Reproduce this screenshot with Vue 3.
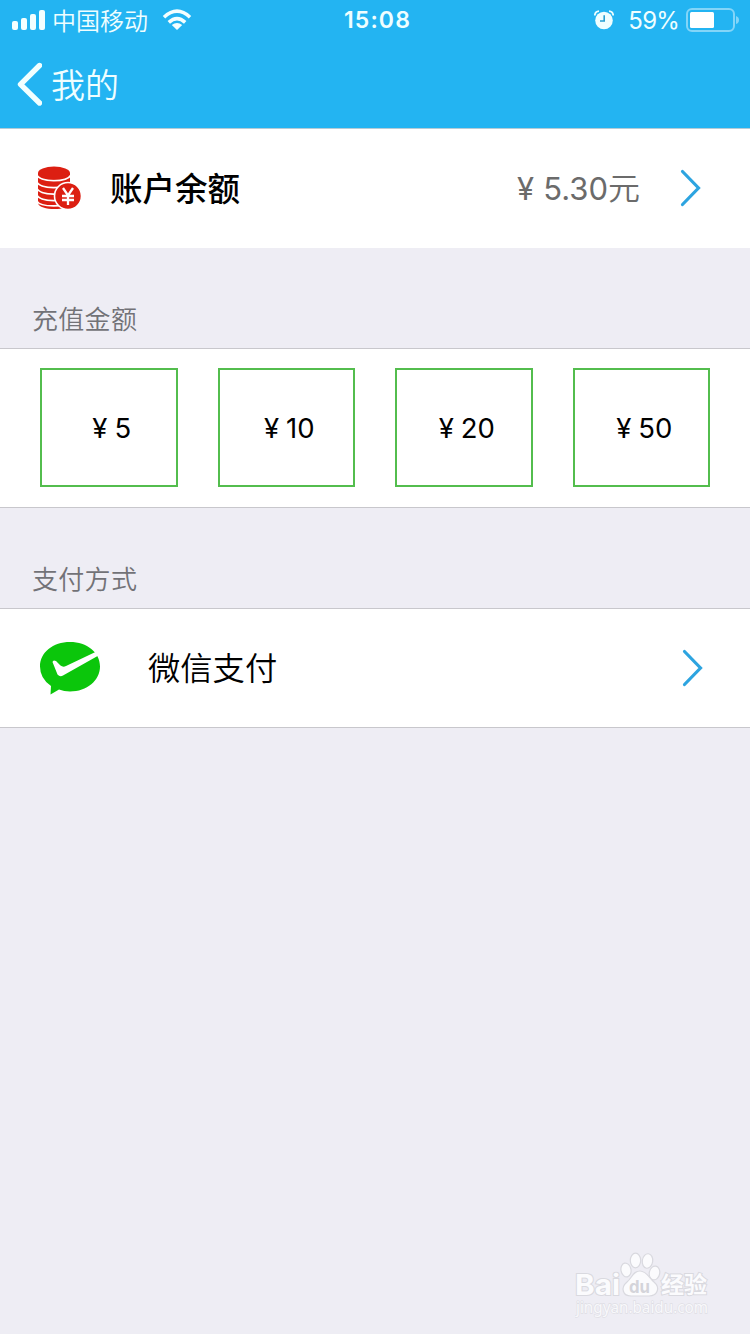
<script setup>
const signalBars = [9, 12, 16, 20]
const amounts = [5, 10, 20, 50]
</script>

<template>
  <main class="screen">
    <header class="top">
      <div class="status">
        <div class="carrier">
          <div class="signal">
            <i v-for="h in signalBars" :key="h" :style="{ height: h + 'px' }"></i>
          </div>
          <span class="carrier-name">中国移动</span>
          <svg class="wifi" width="30" height="22" viewBox="0 0 30 22">
            <g fill="none" stroke="#f4ffff" stroke-width="3.6">
              <path d="M2 8.2Q15-3.8 28 8.2" />
              <path d="M6.8 13.4Q15 6 23.2 13.4" />
            </g>
            <path d="M9.8 16Q15 12 20.2 16L15 21Z" fill="#f4ffff" />
          </svg>
        </div>
        <time class="clock">15:08</time>
        <div class="power">
          <svg class="alarm" width="20" height="20" viewBox="0 0 20 20">
            <path d="M.8 5.5Q1 1.5 5 1.2M19.2 5.5Q19 1.5 15 1.2" fill="none" stroke="#effeff" stroke-width="1.8" />
            <circle cx="10" cy="10.5" r="8.8" fill="#effeff" />
            <path d="M10.2 5.2V11H6" fill="none" stroke="#279fd2" stroke-width="1.6" />
          </svg>
          <span class="percent">59%</span>
          <svg class="battery" width="53" height="24" viewBox="0 0 53 24">
            <rect x="1" y="1" width="47" height="22" rx="5" fill="none" stroke="#83d5f8" stroke-width="2" />
            <rect x="4" y="4" width="24" height="16" rx="1.5" fill="#fff" />
            <path d="M50 8Q53 9 53 12T50 16Z" fill="#83d5f8" />
          </svg>
        </div>
      </div>
      <nav class="nav">
        <svg width="26" height="44" viewBox="0 0 26 44">
          <path d="M23.500 3.500L4.500 22.300L23.500 41" fill="none" stroke="#f1ffff" stroke-width="5.400" stroke-linecap="round" stroke-linejoin="round" />
        </svg>
        <span class="nav-title">我的</span>
      </nav>
    </header>

    <section class="balance">
      <svg class="coins" width="46" height="46" viewBox="0 0 46 46">
        <path d="M2 8V38C3 46 34 46 34 38V8Z" fill="#dc1f12" />
        <g fill="none" stroke="#fff" stroke-width="1.600">
          <path d="M1 10C4 17.500 31 17.500 35 10" />
          <path d="M1 17C4 24.500 31 24.500 35 17" />
          <path d="M1 23.500C4 31 31 31 35 23.500" />
          <path d="M1 30C4 37.500 31 37.500 35 30" />
          <path d="M1 36C4 42.500 31 42.500 35 36" />
        </g>
        <ellipse cx="18" cy="8" rx="16" ry="6.500" fill="#dc1f12" />
        <circle cx="32" cy="31" r="13.500" fill="#dc1f12" stroke="#fff" stroke-width="1.600" />
        <path d="M27 23L32 30.500L37 23M32 30V40M26 31H38M26 35H38" fill="none" stroke="#fff" stroke-width="2.300" />
      </svg>
      <h1 class="balance-label">账户余额</h1>
      <p class="balance-value"><span class="yen">¥</span><span>5.30</span><span class="unit">元</span></p>
      <svg class="chevron" width="22" height="40" viewBox="0 0 22 40">
        <path d="M2.500 3.500L18.500 20L2.500 36.500" fill="none" stroke="#2da4e0" stroke-width="3.200" stroke-linecap="round" />
      </svg>
    </section>

    <h2 class="caption">充值金额</h2>
    <section class="amounts">
      <button v-for="a in amounts" :key="a" class="amount" type="button">
        <span class="amount-yen">¥</span><span>{{ a }}</span>
      </button>
    </section>

    <h2 class="caption second">支付方式</h2>
    <section class="payment">
      <svg class="wechat" width="62" height="54" viewBox="0 0 62 54">
        <path d="M30 1C47 1 60 11.500 60 25.500S47 50.500 30 50.500Q24 50.500 19 48.500L10.500 53.500L11 45Q0 37.500 0 25.500C0 11.500 13 1 30 1Z" fill="#0bc60b" />
        <path d="M12.500 21Q13 18.500 16 20L20.500 24.500Q23 26.500 26 25L56.500 10.500L58.500 14.500L23 34.500Q20 36.500 17.500 33.500Z" fill="#fff" />
      </svg>
      <span class="payment-name">微信支付</span>
      <svg class="chevron" width="22" height="40" viewBox="0 0 22 40">
        <path d="M2.500 3.500L18.500 20L2.500 36.500" fill="none" stroke="#2da4e0" stroke-width="3.200" stroke-linecap="round" />
      </svg>
    </section>

    <aside class="watermark">
      <svg width="140" height="72" viewBox="0 0 140 72">
        <g fill="#fbfbfd" stroke="#d9d9df" stroke-width="1.200">
          <ellipse cx="51" cy="20" rx="5" ry="7" transform="rotate(-12 51 20)" />
          <ellipse cx="60.500" cy="10.500" rx="5.200" ry="7.300" />
          <ellipse cx="72.500" cy="11" rx="5.200" ry="7.300" transform="rotate(8 72.500 11)" />
          <ellipse cx="79.500" cy="23" rx="5.200" ry="7" transform="rotate(12 79.500 23)" />
          <path d="M65 21C72 21 74 28 79 32C86 38 82 46 74 46H56C48 46 45 38 52 32C57 28 58 21 65 21Z" />
        </g>
        <g fill="#fbfbfd" stroke="#d9d9df" stroke-width="2" paint-order="stroke" font-weight="700">
          <text x="0" y="45" class="latin" font-size="29" textLength="45" lengthAdjust="spacingAndGlyphs">Bai</text>
          <text x="86" y="43" class="han" font-size="23" textLength="46">经验</text>
        </g>
        <text x="1" y="63" class="url" font-size="16" fill="#f8f8fb" stroke="#dedee4" stroke-width="1.300" paint-order="stroke" textLength="132" lengthAdjust="spacingAndGlyphs">jingyan.baidu.com</text>
        <text x="54" y="43" class="latin" font-size="18" font-weight="700" fill="#d4d4da" textLength="21" lengthAdjust="spacingAndGlyphs">du</text>
      </svg>
    </aside>
  </main>
</template>

<style>
html, body { margin: 0; background: #eeedf4; }
</style>

<style scoped>
.screen {
  position: relative;
  box-sizing: border-box;
  width: 750px;
  height: 1334px;
  overflow: hidden;
  background: #eeedf4;
  color: #000;
  font-family: Inter, "Noto Sans CJK SC", sans-serif;
}
.screen svg { display: block; flex: none; }
.top {
  box-sizing: border-box;
  height: 129px;
  background: #23b4f2;
  border-bottom: 1px solid #b4cbd7;
  color: #effeff;
}
.status {
  display: grid;
  grid-template-columns: 1fr auto 1fr;
  grid-template-rows: 40px;
  height: 40px;
  align-items: center;
  padding: 0 12px;
}
.carrier { display: flex; align-items: center; }
.signal { display: flex; align-items: flex-end; gap: 3px; height: 20px; margin-right: 7px; }
.signal i { width: 6px; border-radius: 2px; background: #f4ffff; }
.carrier-name {
  font-family: "Noto Sans CJK SC", sans-serif;
  font-size: 24px;
  font-weight: 350;
  line-height: 36px;
  margin-right: 14px;
}
.clock { font-size: 23px; font-weight: 600; letter-spacing: 1.100px; line-height: 40px; padding-left: 5px; }
.power { display: flex; align-items: center; justify-content: flex-end; margin-right: -1px; }
.percent { font-size: 24px; font-weight: 400; margin: 1px 7px 0 14px; letter-spacing: -0.800px; }
.nav { display: flex; align-items: center; height: 88px; padding-left: 16px; }
.nav-title {
  font-family: "Noto Sans CJK SC", sans-serif;
  font-size: 34px;
  font-weight: 350;
  line-height: 50px;
  margin: -1px 0 0 9px;
}
.balance {
  display: flex;
  align-items: center;
  box-sizing: border-box;
  height: 119px;
  padding: 0 48px 2px 36px;
  background: #fff;
}
.balance-label {
  margin: -2px auto 0 28px;
  font-family: "Noto Sans CJK SC", sans-serif;
  font-size: 32.500px;
  font-weight: 500;
  line-height: 48px;
}
.balance-value { display: flex; align-items: baseline; margin: 0; color: #6b6b6b; font-size: 31px; font-weight: 400; line-height: 48px; }
.yen { margin-right: 9px; }
.unit { font-family: "Noto Sans CJK SC", sans-serif; font-size: 32px; font-weight: 350; }
.balance .chevron { margin-left: 40px; }
.caption {
  box-sizing: border-box;
  height: 100px;
  margin: 0;
  padding: 51px 0 0 32px;
  color: #727277;
  font-family: "Noto Sans CJK SC", sans-serif;
  font-size: 26px;
  font-weight: 350;
  line-height: 38px;
  letter-spacing: 0.300px;
}
.amounts {
  display: grid;
  grid-template-columns: repeat(4, 1fr);
  gap: 40px;
  box-sizing: border-box;
  height: 160px;
  padding: 19px 40px 20px;
  background: #fff;
  border: solid #c8c7cc;
  border-width: 1px 0;
}
.amount {
  display: flex;
  align-items: center;
  justify-content: center;
  gap: 7px;
  padding: 0 0 0 6px;
  border: 2px solid #53bd4d;
  background: #fff;
  color: #000;
  font: 400 27.500px/34px Inter, sans-serif;
}
.payment {
  display: flex;
  align-items: center;
  box-sizing: border-box;
  height: 120px;
  padding: 0 46px 0 40px;
  background: #fff;
  border: solid #c8c7cc;
  border-width: 1px 0;
}
.payment-name {
  margin: -5px auto 0 46px;
  font-family: "Noto Sans CJK SC", sans-serif;
  font-size: 32.300px;
  font-weight: 350;
  line-height: 48px;
}
.watermark { position: absolute; left: 575px; top: 1250px; }
.latin { font-family: Inter, sans-serif; }
.url { font-family: "Noto Sans", sans-serif; }
.han { font-family: "Noto Sans CJK SC", sans-serif; }
</style>
